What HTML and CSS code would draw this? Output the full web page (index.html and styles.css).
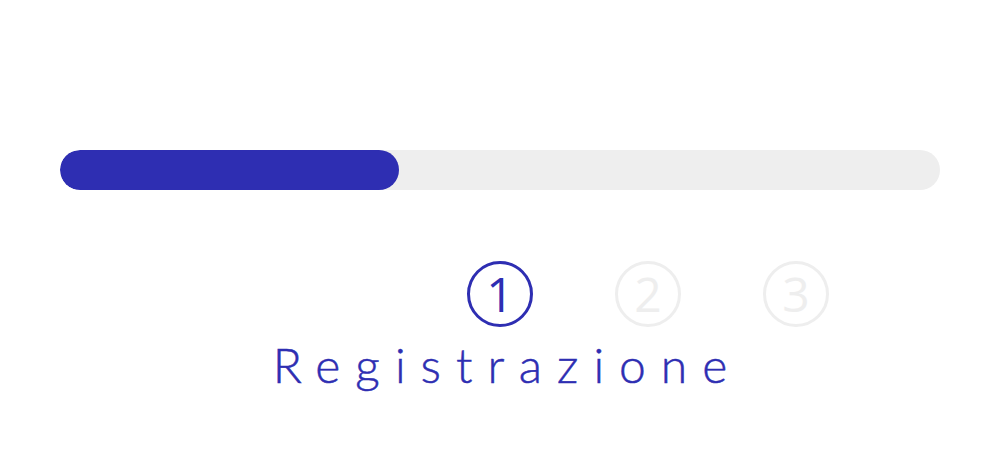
FILE: index.html
```html
<!DOCTYPE html>
<html lang="it">
<head>
<meta charset="utf-8">
<link rel="stylesheet" href="styles.css">
</head>
<body>
<main class="wizard">
  <div class="progress">
    <div class="progress-fill" style="width: 38.5%"></div>
  </div>
  <div class="steps">
    <div class="step active">1</div>
    <div class="step">2</div>
    <div class="step">3</div>
  </div>
  <h1 class="title">Registrazione</h1>
</main>
</body>
</html>
```
FILE: styles.css
```css
html, body {
  margin: 0;
  padding: 0;
  background: #ffffff;
}
.wizard {
  width: 1000px;
  height: 450px;
  box-sizing: border-box;
  padding: 150px 60px 0 60px;
}
.progress {
  height: 40px;
  border-radius: 20px;
  background: #eeeeee;
  overflow: hidden;
}
.progress-fill {
  height: 100%;
  border-radius: 20px;
  background: #2e2eb2;
}
.steps {
  display: flex;
  gap: 82px;
  padding-left: 407px;
  margin-top: 71px;
}
.step {
  width: 66px;
  height: 66px;
  box-sizing: border-box;
  border: 3px solid #eeeeee;
  border-radius: 50%;
  color: #eeeeee;
  display: flex;
  align-items: center;
  justify-content: center;
  font-family: "Open Sans", sans-serif;
  font-weight: 400;
  font-size: 48px;
  line-height: 1;
}
.step.active {
  border-color: #2e2eb2;
  color: #2e2eb2;
}
.title {
  margin: 10px 0 0 0;
  text-align: center;
  font-family: "Lato", sans-serif;
  font-weight: 300;
  font-size: 48px;
  line-height: 56px;
  letter-spacing: 15px;
  padding-left: 15px;
  color: #2e2eb2;
  -webkit-text-stroke: 0.5px #2e2eb2;
}
```
